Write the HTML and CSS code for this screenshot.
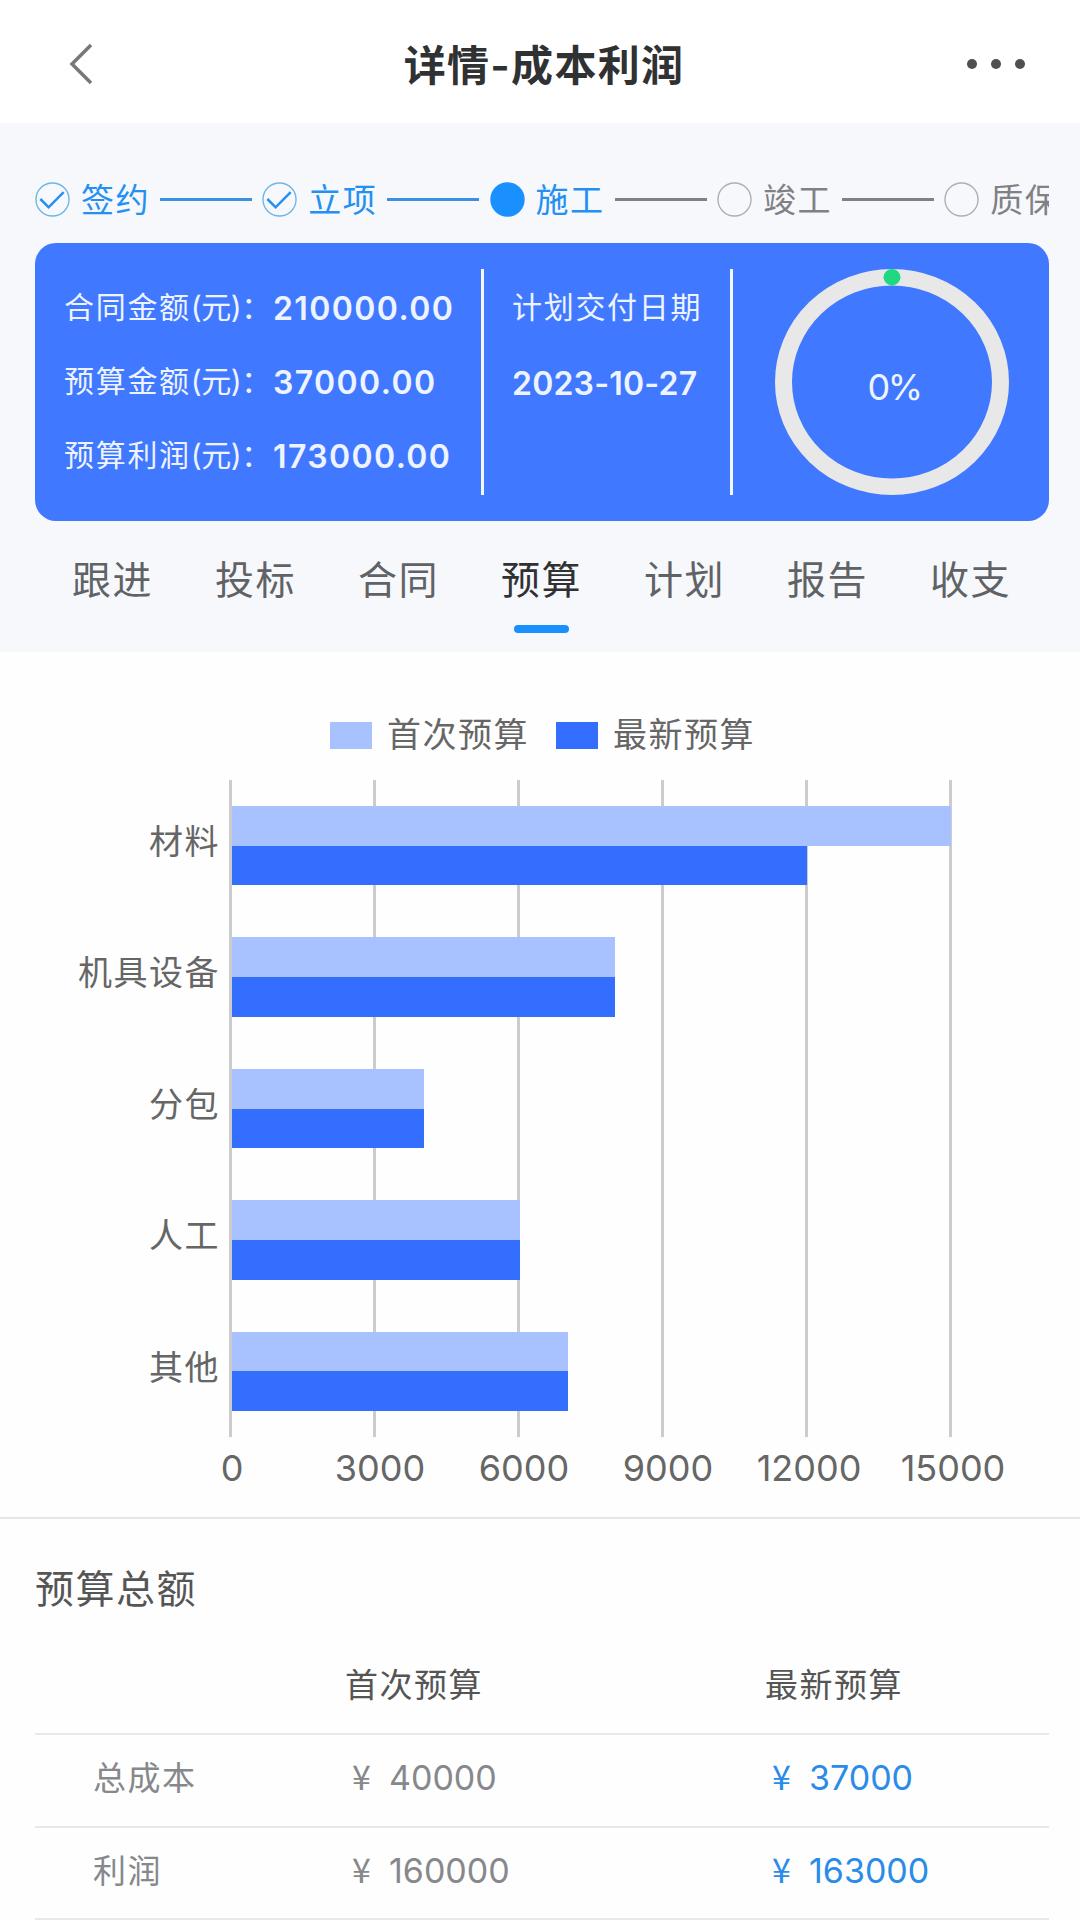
FILE: index.html
```
<!DOCTYPE html>
<html lang="zh-CN">
<head>
    <meta charset="UTF-8">
    <meta name="viewport" content="width=device-width, initial-scale=1.0">
    <title>详情-成本利润</title>
    <link rel="stylesheet" href="styles.css">
</head>
<body>
    <header class="navbar">
        <svg class="back" viewBox="0 0 24 42"><path d="M22 2 L3 21 L22 40"/></svg>
        <h1>详情-成本利润</h1>
        <div class="more"><i></i><i></i><i></i></div>
    </header>

    <section class="top">
        <div class="steps">
            <div class="step done">
                <svg class="dot" viewBox="0 0 36 36"><circle cx="18" cy="18" r="17"/><path d="M5.500 17.500 L14 26 L29.500 10.500"/></svg>
                <span>签约</span><b></b>
            </div>
            <div class="step done">
                <svg class="dot" viewBox="0 0 36 36"><circle cx="18" cy="18" r="17"/><path d="M5.500 17.500 L14 26 L29.500 10.500"/></svg>
                <span>立项</span><b></b>
            </div>
            <div class="step done current">
                <svg class="dot" viewBox="0 0 36 36"><circle cx="18" cy="18" r="17"/></svg>
                <span>施工</span><b class="todo"></b>
            </div>
            <div class="step">
                <svg class="dot" viewBox="0 0 36 36"><circle cx="18" cy="18" r="17"/></svg>
                <span>竣工</span><b></b>
            </div>
            <div class="step">
                <svg class="dot" viewBox="0 0 36 36"><circle cx="18" cy="18" r="17"/></svg>
                <span>质保</span>
            </div>
        </div>

        <div class="card">
            <div class="amounts">
                <p><span>合同金额<u>(元)</u>：</span><strong>210000.00</strong></p>
                <p><span>预算金额<u>(元)</u>：</span><strong>37000.00</strong></p>
                <p><span>预算利润<u>(元)</u>：</span><strong>173000.00</strong></p>
            </div>
            <div class="date">
                <p>计划交付日期</p>
                <p><strong>2023-10-27</strong></p>
            </div>
            <div class="progress">
                <svg class="ring" viewBox="0 0 234 234" preserveAspectRatio="none">
                    <circle class="track" cx="117" cy="117" r="108.500"/>
                    <circle class="point" cx="117" cy="8.500" r="8.500"/>
                </svg>
                <span>0%</span>
            </div>
        </div>

        <nav class="tabs">
            <a>跟进</a>
            <a>投标</a>
            <a>合同</a>
            <a class="active">预算</a>
            <a>计划</a>
            <a>报告</a>
            <a>收支</a>
        </nav>
    </section>

    <section class="chart">
        <div class="legend">
            <i class="first"></i><span>首次预算</span>
            <i class="latest"></i><span>最新预算</span>
        </div>
        <div class="plot">
            <div class="names">
                <span>材料</span>
                <span>机具设备</span>
                <span>分包</span>
                <span>人工</span>
                <span>其他</span>
            </div>
            <div class="area">
                <div class="group"><div class="bar first" style="width:100%"></div><div class="bar latest" style="width:80%"></div></div>
                <div class="group"><div class="bar first" style="width:53.33%"></div><div class="bar latest" style="width:53.33%"></div></div>
                <div class="group"><div class="bar first" style="width:26.67%"></div><div class="bar latest" style="width:26.67%"></div></div>
                <div class="group"><div class="bar first" style="width:40%"></div><div class="bar latest" style="width:40%"></div></div>
                <div class="group"><div class="bar first" style="width:46.67%"></div><div class="bar latest" style="width:46.67%"></div></div>
            </div>
        </div>
        <div class="axis">
            <span class="zero">0</span><span>3000</span><span>6000</span><span>9000</span><span class="wide">12000</span><span class="wide">15000</span>
        </div>
    </section>

    <section class="total">
        <h2>预算总额</h2>
        <div class="row head"><span></span><span>首次预算</span><span>最新预算</span></div>
        <div class="row">
            <span>总成本</span>
            <span class="money"><em>¥</em>40000</span>
            <span class="money blue"><em>¥</em>37000</span>
        </div>
        <div class="row">
            <span>利润</span>
            <span class="money"><em>¥</em>160000</span>
            <span class="money blue"><em>¥</em>163000</span>
        </div>
    </section>
</body>
</html>
```
FILE: styles.css
```
* {
    box-sizing: border-box;
    margin: 0;
    padding: 0;
}
body {
    width: 1080px;
    height: 1920px;
    overflow: hidden;
    background: #fefefe;
    color: #606266;
    font-family: Inter, "Noto Sans CJK SC", sans-serif;
    font-size: 33px;
    letter-spacing: 1.5px;
    white-space: nowrap;
}
i, em {
    font-style: normal;
}

/* header */
.navbar {
    display: flex;
    align-items: center;
    justify-content: space-between;
    height: 123px;
    padding: 5px 55px 0 69px;
    background: #fff;
}
.back {
    width: 24px;
    height: 42px;
    fill: none;
    stroke: #777;
    stroke-width: 3.5;
}
.navbar h1 {
    margin-left: 28px;
    padding-bottom: 4px;
    font-size: 42px;
    font-weight: 600;
    letter-spacing: 1.3px;
    color: #303133;
}
.more {
    display: flex;
    gap: 14px;
}
.more i {
    width: 10px;
    height: 10px;
    border-radius: 50%;
    background: #505050;
}

/* stage + summary */
.top {
    height: 529px;
    padding: 46px 31px 0 35px;
    background: #f6f8fc;
}
.steps {
    display: flex;
    height: 60px;
    margin-bottom: 14px;
    overflow: hidden;
}
.step {
    display: flex;
    flex: 0 0 227.3px;
    align-items: center;
    color: #808184;
}
.step .dot {
    width: 35px;
    height: 35px;
    fill: none;
    stroke: #adafb3;
    stroke-width: 1.4;
}
.step span {
    width: 69px;
    margin-left: 11px;
    line-height: 60px;
    padding-top: 1px;
}
.step b {
    width: 92px;
    height: 3px;
    margin-left: 10px;
    background: #808184;
}
.done {
    color: #2490f2;
}
.done .dot {
    stroke: #6db6e6;
}
.done .dot path {
    stroke: #2490f2;
    stroke-width: 2.6;
}
.done b {
    background: #3d90dc;
}
.done .todo {
    background: #808184;
}
.current .dot circle {
    fill: #1a90ff;
    stroke: #1a90ff;
}
.card {
    display: flex;
    height: 278px;
    padding: 26px 0;
    border-radius: 21px;
    background: #4078ff;
    color: #edf4ff;
    font-size: 30px;
    letter-spacing: 1.7px;
}
.steps, .card {
    width: 1014px;
}
.amounts {
    width: 449px;
    padding-left: 29px;
    border-right: 3px solid #f3f6ff;
}
.amounts p {
    display: flex;
    height: 74px;
    line-height: 76px;
}
.amounts span {
    width: 209px;
}
.amounts u {
    text-decoration: none;
    letter-spacing: -0.5px;
}
.card strong {
    font-size: 32px;
    font-weight: 600;
    letter-spacing: 1.4px;
    line-height: 79px;
}
.date {
    width: 249px;
    padding-left: 28px;
    border-right: 3px solid #f3f6ff;
}
.date p {
    height: 75px;
    line-height: 77px;
}
.date strong {
    letter-spacing: 0.2px;
}
.progress {
    display: grid;
    width: 234px;
    height: 226px;
    margin-left: 42px;
    place-items: center;
}
.progress > * {
    grid-area: 1 / 1;
}
.ring {
    width: 234px;
    height: 226px;
}
.track {
    fill: none;
    stroke: #e8e8e8;
    stroke-width: 17;
}
.point {
    fill: #20d880;
}
.progress span {
    padding: 9px 0 0 4px;
    font-size: 36px;
    font-weight: 400;
    letter-spacing: -2.5px;
}

.tabs {
    display: flex;
    padding-left: 6px;
}
.tabs a {
    position: relative;
    flex: 0 0 143px;
    height: 131px;
    text-align: center;
    font-size: 39px;
    line-height: 117px;
}
.tabs .active {
    color: #303133;
}
.tabs .active::after {
    content: "";
    position: absolute;
    left: 44px;
    bottom: 19px;
    width: 55px;
    height: 8px;
    border-radius: 4px;
    background: #1a90ff;
}

/* budget chart */
.chart {
    height: 867px;
    padding-top: 58px;
    border-bottom: 2px solid #e6e6e6;
    color: #666;
    font-size: 34px;
}
.legend {
    display: flex;
    height: 50px;
    margin-bottom: 20px;
    padding-left: 330px;
    line-height: 50px;
}
.legend i {
    width: 42px;
    height: 27px;
    margin: 12px 15px 0 0;
}
.legend span {
    width: 169px;
}
.first {
    background: #a8c1ff;
}
.latest {
    background: #336eff;
}
.plot {
    display: flex;
    height: 657px;
}
.names {
    display: flex;
    flex-direction: column;
    width: 229px;
    padding-right: 9px;
    text-align: right;
}
.names span {
    flex: 1;
    line-height: 124px;
}
.area {
    display: flex;
    flex-direction: column;
    width: 723px;
    padding: 0 1px 0 2px;
    border-left: 3px solid #ccc;
    background: repeating-linear-gradient(to right, transparent 0 141px, #ccc 141px 144px);
}
.group {
    display: flex;
    flex: 1;
    flex-direction: column;
    justify-content: center;
    margin-left: -2px;
}
.bar {
    height: 39.7px;
}
.axis {
    display: flex;
    padding: 5px 0 0 164px;
    font-size: 36px;
    letter-spacing: 0;
    line-height: 53px;
}
.axis span {
    width: 144px;
    text-align: center;
}
.axis .zero {
    padding-right: 8px;
}
.axis .wide {
    padding-right: 6px;
}

/* totals */
.total {
    padding: 0 31px 0 35px;
}
.total h2 {
    height: 116px;
    font-size: 39px;
    font-weight: 400;
    line-height: 139px;
    color: #555;
}
.row {
    display: grid;
    grid-template-columns: 310px 420px 284px;
    width: 1014px;
    height: 92.5px;
    border-bottom: 2px solid #e8e8e8;
    line-height: 86px;
    color: #86888c;
}
.row span:first-child {
    padding-left: 58px;
}
.head {
    height: 100px;
    line-height: 101px;
    color: #555;
}
.money {
    display: flex;
    padding-left: 7px;
    font-size: 34px;
    letter-spacing: 0;
}
.money em {
    width: 37px;
    font-family: "Noto Sans CJK SC", sans-serif;
    line-height: 82px;
}
.blue {
    color: #2a8ce8;
}
```
